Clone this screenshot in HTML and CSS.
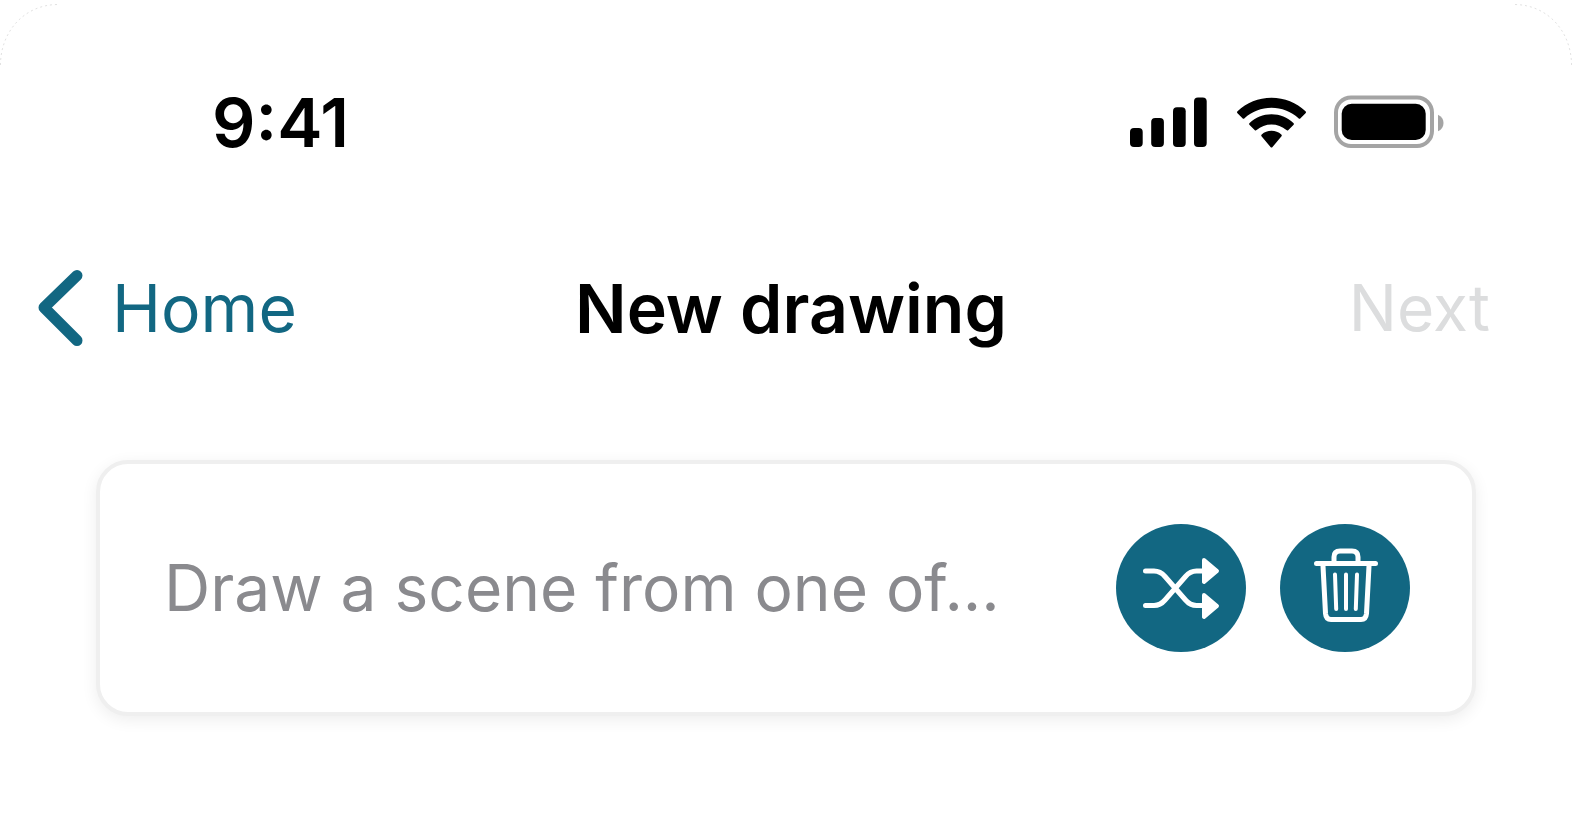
FILE: index.html
```html
<!DOCTYPE html>
<html lang="en">

<head>
  <meta charset="UTF-8">
  <meta name="viewport" content="width=device-width, initial-scale=1.0">
  <title>New drawing</title>
  <link rel="stylesheet" href="styles.css">
</head>

<body>
  <div class="screen">
    <svg class="corner corner-left" viewBox="0 0 60 66" aria-hidden="true"><path d="M.5 65C.5 32 24 4.500 58 4.500"/></svg>
    <svg class="corner corner-right" viewBox="0 0 60 66" aria-hidden="true"><path d="M.5 65C.5 32 24 4.500 58 4.500"/></svg>

    <header class="status-bar">
      <time class="clock">9:41</time>
      <div class="status-icons">
        <svg class="signal" viewBox="0 0 77 54" role="img" aria-label="Signal">
          <rect x="0" y="33" width="12.700" height="19" rx="4"/>
          <rect x="21.200" y="23" width="12.700" height="29" rx="4"/>
          <rect x="43" y="12.300" width="12.700" height="39.700" rx="4"/>
          <rect x="64" y="2.600" width="12.700" height="49.400" rx="4"/>
        </svg>
        <svg class="wifi" viewBox="-3 0 73 54" role="img" aria-label="Wi-Fi">
          <path d="M34.500 2.800C47.500 2.800 59.500 7.800 68.500 16.200Q69.500 17.200 68.500 18.200L63.500 23.200Q62.500 24.200 61.500 23.200C54 16.500 44.500 12.800 34.500 12.800S15 16.500 7.500 23.200Q6.500 24.200 5.500 23.200L.5 18.200Q-.5 17.200 .5 16.200C9.500 7.800 21.500 2.800 34.500 2.800Z"/>
          <path d="M34.500 19.300C42.800 19.300 50.500 22.500 56.400 28Q57.400 29 56.400 30L51.400 35Q50.400 36 49.400 35.100C45.300 31.500 40 29.500 34.500 29.500S23.700 31.500 19.600 35.100Q18.600 36 17.600 35L12.600 30Q11.600 29 12.600 28C18.500 22.500 26.200 19.300 34.500 19.300Z"/>
          <path d="M34.500 35.800C38.200 35.800 41.600 37.100 44.300 39.500Q45.300 40.500 44.300 41.500L35.500 52Q34.500 53 33.500 52L24.700 41.500Q23.700 40.500 24.700 39.500C27.400 37.100 30.800 35.800 34.500 35.800Z"/>
        </svg>
        <svg class="battery" viewBox="0 0 110 54" role="img" aria-label="Battery full">
          <rect class="battery-shell" x="2" y="2.500" width="96" height="48.500" rx="15"/>
          <rect x="7.700" y="8.700" width="84" height="36.300" rx="10"/>
          <path class="battery-tip" d="M104 19.700C107.500 21.200 109.500 24.200 109.500 28S107.500 34.800 104 36.300Z"/>
        </svg>
      </div>
    </header>

    <nav class="nav-bar">
      <a class="back" href="#">
        <svg viewBox="0 0 46 78" aria-hidden="true"><path d="M39 6.500L6 38.500L39 71.500"/></svg>
        <span>Home</span>
      </a>
      <h1>New drawing</h1>
      <button class="next" type="button" disabled>Next</button>
    </nav>

    <main>
      <form class="prompt-card">
        <input type="text" class="prompt-input" aria-label="Drawing prompt" placeholder="Draw a scene from one of...">
        <button class="round-btn" type="button" aria-label="Shuffle prompt">
          <svg viewBox="0 0 130 128" aria-hidden="true">
            <path class="line" d="M29.500 47H38C43 47 46 49 49 52.500L69.500 76C72.500 79.500 75.500 81.500 80.500 81.500H89M29.500 81.500H38C43 81.500 46 79.500 49 76L69.500 52.500C72.500 49 75.500 47 80.500 47H89"/>
            <path class="head" d="M88 36L101 47L88 58V36ZM88 71L101 82L88 93V71Z"/>
          </svg>
        </button>
        <button class="round-btn" type="button" aria-label="Delete prompt">
          <svg viewBox="0 0 130 128" aria-hidden="true">
            <path class="line" d="M36.500 39.500H95.500M54 39V33Q54 27 60 27H72Q78 27 78 33V39M43 42L45.500 89.500Q46 95.500 51 95.500H81Q86 95.500 86.500 89.500L89 42"/>
            <path class="line thin" d="M55 50.500L56.200 85M66 50.500V85M77 50.500L75.800 85"/>
          </svg>
        </button>
      </form>
    </main>
  </div>
</body>

</html>
```

FILE: styles.css
```css
* {
  box-sizing: border-box;
}

body {
  margin: 0;
  background: #fff;
  color: #000;
  font-family: Inter, "Liberation Sans", sans-serif;
  font-size: 66px;
  line-height: 80px;
}

svg {
  display: block;
  flex: none;
}

button {
  border: none;
  padding: 0;
  font: inherit;
  cursor: pointer;
}

.screen {
  position: relative;
  min-height: 100vh;
  padding-top: 82px;
}

/* faint rounded edge of the screen */
.corner {
  position: absolute;
  top: 0;
  width: 60px;
  height: 66px;
  fill: none;
  stroke: #e2e2e2;
  stroke-dasharray: 2 3;
}

.corner-left {
  left: 0;
}

.corner-right {
  right: 0;
  transform: scaleX(-1);
}

.status-bar {
  display: flex;
  align-items: center;
  justify-content: space-between;
  padding: 0 128px 0 212px;
}

.clock {
  font-size: 68px;
  font-weight: 600;
}

.status-icons {
  display: flex;
  align-items: center;
  gap: 27px;
}

.status-icons svg {
  height: 54px;
}

.signal {
  width: 77px;
}

.wifi {
  width: 73px;
}

.battery {
  width: 110px;
}

.battery-shell {
  fill: none;
  stroke: #a4a4a4;
  stroke-width: 4;
}

.battery-tip {
  fill: #a4a4a4;
}

.nav-bar {
  display: grid;
  grid-template-columns: 1fr auto 1fr;
  align-items: center;
  margin-top: 106px;
  padding: 0 28px 0 38px;
}

.nav-bar h1 {
  margin: 0;
  font-size: 68px;
  font-weight: 600;
}

.back {
  display: flex;
  align-items: center;
  justify-self: start;
  gap: 28px;
  color: #126782;
  text-decoration: none;
}

.back svg {
  width: 46px;
  height: 78px;
  fill: none;
  stroke: currentColor;
  stroke-width: 11;
  stroke-linecap: round;
  stroke-linejoin: round;
}

.next {
  justify-self: end;
  padding-right: 54px;
  background: none;
  color: #dcddde;
  font-size: 64px;
}

.prompt-card {
  display: flex;
  align-items: center;
  gap: 34px;
  margin: 112px 96px 0;
  padding: 60px 62px 60px 64px;
  border: 4px solid #efefef;
  border-radius: 32px;
  background: #fff;
  box-shadow: 0 4px 16px rgba(0, 0, 0, 0.07);
}

.prompt-input {
  flex: 1;
  min-width: 0;
  padding: 0;
  border: none;
  outline: none;
  background: none;
  font: inherit;
  font-size: 64px;
}

.prompt-input::placeholder {
  color: #8a8a8e;
  opacity: 1;
}

.round-btn {
  flex: none;
  width: 130px;
  height: 128px;
  border-radius: 50%;
  background: #126782;
}

.round-btn svg {
  width: 130px;
  height: 128px;
}

.line {
  fill: none;
  stroke: #fff;
  stroke-width: 5;
  stroke-linecap: round;
  stroke-linejoin: round;
}

.thin {
  stroke-width: 4;
}

.head {
  fill: #fff;
  stroke: #fff;
  stroke-width: 4;
  stroke-linejoin: round;
}
```
